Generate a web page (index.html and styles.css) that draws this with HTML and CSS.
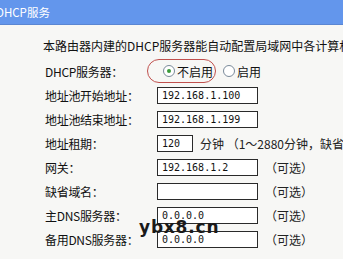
FILE: index.html
```html
<!DOCTYPE html>
<html>
<head>
<meta charset="utf-8">
<link rel="stylesheet" href="styles.css">
</head>
<body>
<div class="page">
  <div class="header">DHCP服务</div>
  <p class="intro">本路由器内建的DHCP服务器能自动配置局域网中各计算机的TCP/IP协议。</p>
  <div class="form">
    <div class="label">DHCP服务器：</div>
    <div class="field">
      <span class="mark"><span class="radio on"></span>不启用</span>
      <span class="opt"><span class="radio"></span>启用</span>
    </div>

    <div class="label">地址池开始地址：</div>
    <div class="field"><span class="box">192.168.1.100</span></div>

    <div class="label">地址池结束地址：</div>
    <div class="field"><span class="box">192.168.1.199</span></div>

    <div class="label">地址租期：</div>
    <div class="field"><span class="box short">120</span><span class="note">分钟 （1～2880分钟，缺省为120分钟）</span></div>

    <div class="label">网关：</div>
    <div class="field"><span class="box">192.168.1.2</span><span class="note">（可选）</span></div>

    <div class="label">缺省域名：</div>
    <div class="field"><span class="box"></span><span class="note">（可选）</span></div>

    <div class="label">主DNS服务器：</div>
    <div class="field"><span class="box">0.0.0.0</span><span class="note">（可选）</span></div>

    <div class="label">备用DNS服务器：</div>
    <div class="field"><span class="box">0.0.0.0</span><span class="note">（可选）</span></div>
  </div>
  <div class="watermark">ybx8.cn</div>
</div>
</body>
</html>
```
FILE: styles.css
```css
html, body {
  margin: 0;
  padding: 0;
}
body {
  background: #f7f7f5;
  font-family: "Noto Sans CJK SC", "DejaVu Sans", sans-serif;
  font-size: 12px;
  color: #111;
  overflow: hidden;
  width: 343px;
  height: 259px;
}
.page {
  position: relative;
  width: 343px;
  height: 259px;
  overflow: hidden;
}
.header {
  height: 24px;
  line-height: 24px;
  background: #6396ec;
  border-bottom: 1px solid #5a86d2;
  color: #fff;
  font-size: 11.5px;
  margin-left: -4px;
  white-space: nowrap;
}
.intro {
  margin: 13px 0 0 43px;
  white-space: nowrap;
  line-height: 16px;
  height: 16px;
  font-size: 12px;
}
.form {
  display: grid;
  grid-template-columns: 112px auto;
  grid-auto-rows: 24px;
  margin: 5px 0 0 45px;
}
.label {
  display: flex;
  align-items: center;
  white-space: nowrap;
  letter-spacing: -0.3px;
}
.field {
  display: flex;
  align-items: center;
  white-space: nowrap;
}
.box {
  display: inline-block;
  box-sizing: border-box;
  width: 101px;
  height: 17px;
  line-height: 15px;
  border: 1px solid #2a2a2a;
  background: #fff;
  padding-left: 4px;
  font-family: "DejaVu Sans Mono", monospace;
  font-size: 10px;
  color: #111;
}
.box.short {
  width: 36px;
}
.note {
  margin-left: 7px;
  color: #222;
}
.mark {
  display: inline-flex;
  align-items: center;
  box-sizing: border-box;
  margin-left: -10px;
  height: 24px;
  padding: 0 2px 0 15px;
  border: 1px solid #c0504d;
  border-radius: 12px;
}
.opt {
  display: inline-flex;
  align-items: center;
  margin-left: 7px;
}
.radio {
  display: inline-block;
  box-sizing: border-box;
  width: 12px;
  height: 12px;
  border: 1px solid #7a8a9a;
  border-radius: 50%;
  background: #fff;
  margin-right: 2px;
  position: relative;
}
.radio.on::after {
  content: "";
  position: absolute;
  left: 3px;
  top: 3px;
  width: 4px;
  height: 4px;
  border-radius: 50%;
  background: #3a9a3a;
}
.watermark {
  position: absolute;
  left: 139px;
  top: 219px;
  line-height: 17px;
  font-family: "DejaVu Sans", sans-serif;
  font-weight: bold;
  font-size: 17px;
  color: #1a1a1a;
  letter-spacing: 0.8px;
}
```
